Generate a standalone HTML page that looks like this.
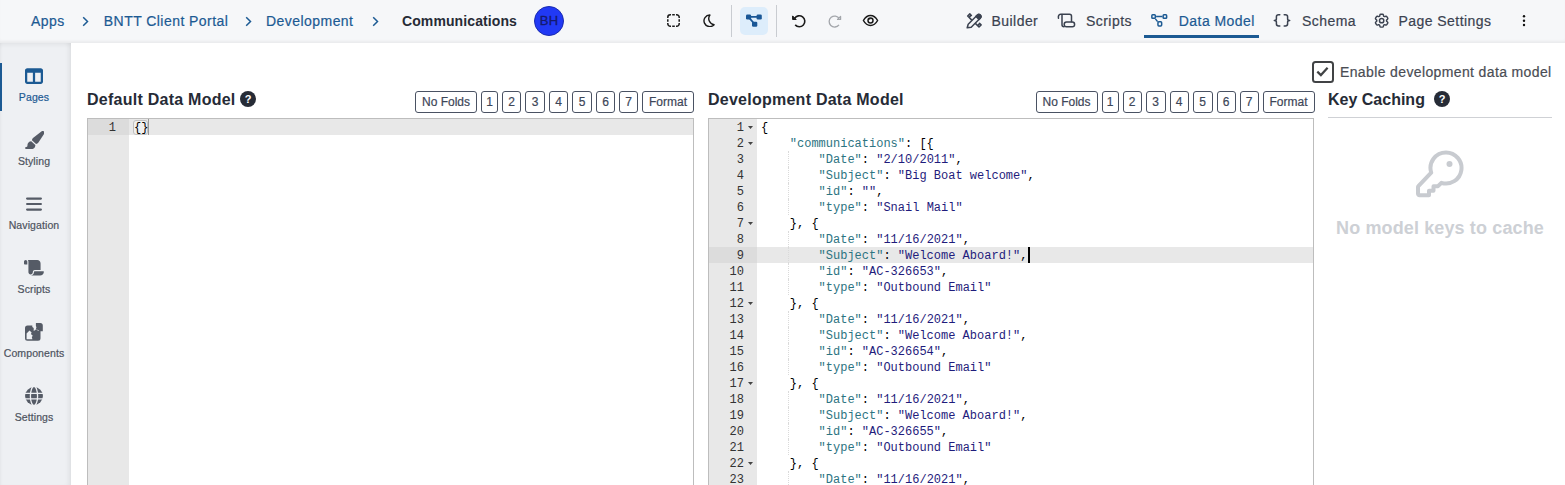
<!DOCTYPE html>
<html><head><meta charset="utf-8">
<style>
*{box-sizing:border-box;margin:0;padding:0}
html,body{width:1565px;height:485px;overflow:hidden;background:#fff;font-family:"Liberation Sans",sans-serif}
.abs{position:absolute}
#hdr{position:absolute;left:0;top:0;width:1565px;height:43px;background:#f6f7f9;box-shadow:inset 0 -3px 3px -1px rgba(0,0,0,.05)}
#side{position:absolute;left:0;top:43px;width:71px;height:442px;background:#eef0f3;box-shadow:inset -5px 0 5px -3px rgba(0,0,0,.07),inset 0 4px 4px -2px rgba(0,0,0,.05),inset 3px 0 3px -2px rgba(0,0,0,.04)}
.bc{position:absolute;top:13px;font-size:14px;color:#1c5a93;white-space:nowrap;line-height:16px;letter-spacing:.45px}
.chev{position:absolute;top:15.6px}
.tab{position:absolute;top:13px;font-size:14px;color:#3b4250;white-space:nowrap;line-height:16px;letter-spacing:.45px}
.tb{position:absolute}
.sl{position:absolute;left:0;width:68px;letter-spacing:.1px;text-align:center;font-size:10.5px;color:#4d535e;line-height:12px}
.h2{position:absolute;font-size:16px;font-weight:bold;color:#262b36;white-space:nowrap;line-height:18px;letter-spacing:.25px}
.q{position:absolute;width:16px;height:16px;border-radius:50%;background:#262b36;color:#fff;font-size:11px;font-weight:bold;text-align:center;line-height:16px}
.btn{position:absolute;top:91px;height:22px;border:1px solid #4a5263;border-radius:3px;font-size:12px;color:#3d4658;text-align:center;line-height:20px;background:#fff}
.ed{position:absolute;top:118px;height:367px;border:1px solid #bdbdbd;border-bottom:none;background:#fff;overflow:hidden}
.gut{position:absolute;left:0;top:0;bottom:0;background:#e8e8e8}
.code{position:absolute;font-family:"Liberation Mono",monospace;font-size:12px;line-height:16px;white-space:pre;color:#000;margin-top:1px}
.ln{position:absolute;font-family:"Liberation Mono",monospace;font-size:12px;line-height:16px;color:#333;text-align:right;margin-top:1px}
.bc,.tab,.sl,.btn,.en{-webkit-text-stroke:.2px currentColor}
.k{color:#2d7482}.s{color:#1f1c7c}
</style></head><body>
<div id="hdr">
<div class="bc" style="left:31px">Apps</div>
<svg class="chev" style="left:82.3px" width="7" height="11" viewBox="0 0 7 11"><path d="M1.2 1.2l4.3 4.3L1.2 9.8" fill="none" stroke="#1c5a93" stroke-width="1.5"/></svg>
<div class="bc" style="left:103.8px">BNTT Client Portal</div>
<svg class="chev" style="left:244.6px" width="7" height="11" viewBox="0 0 7 11"><path d="M1.2 1.2l4.3 4.3L1.2 9.8" fill="none" stroke="#1c5a93" stroke-width="1.5"/></svg>
<div class="bc" style="left:266px">Development</div>
<svg class="chev" style="left:371.6px" width="7" height="11" viewBox="0 0 7 11"><path d="M1.2 1.2l4.3 4.3L1.2 9.8" fill="none" stroke="#1c5a93" stroke-width="1.5"/></svg>
<div class="bc" style="left:402px;color:#262b36;font-weight:bold;letter-spacing:.1px;-webkit-text-stroke:0">Communications</div>
<div class="abs" style="left:534px;top:6px;width:30px;height:30px;border-radius:50%;background:#2139f5;border:1px solid #1a2bb0;color:#141a6e;font-size:13px;text-align:center;line-height:28px;letter-spacing:.2px;-webkit-text-stroke:.3px #141a6e">BH</div>
<!-- toolbar -->
<svg class="tb" style="left:666.5px;top:14.2px" width="13" height="13" viewBox="0 0 13 13" fill="none" stroke="#1a1a1a" stroke-width="1.5"><path d="M.8 4V3.3A2.5 2.5 0 0 1 3.3 .8H4M9 .8h.7A2.5 2.5 0 0 1 12.2 3.3V4M12.2 9v.7A2.5 2.5 0 0 1 9.7 12.2H9M4 12.2h-.7A2.5 2.5 0 0 1 .8 9.7V9M5.2 .8h2.6M5.2 12.2h2.6M.8 5.2v2.6M12.2 5.2v2.6"/></svg>
<svg class="tb" style="left:703px;top:14px" width="12" height="13" viewBox="0 0 12 13"><path d="M6.9 1A5.8 5.8 0 1 0 11.1 10.7A6.2 6.2 0 0 1 6.9 1z" fill="none" stroke="#1a1a1a" stroke-width="1.4" stroke-linejoin="round"/></svg>
<div class="abs" style="left:731px;top:5px;width:1px;height:32px;background:#c9ccd1"></div>
<div class="abs" style="left:740px;top:7px;width:28px;height:28px;border-radius:5px;background:#ddedfb"></div>
<svg class="tb" style="left:745px;top:14px" width="17" height="13" viewBox="0 0 17 13"><path d="M3.5 2.9h11M3.5 3l6 7" stroke="#1a5796" stroke-width="1.9"/><rect x="1" y="0.4" width="5.1" height="5.1" rx="1.3" fill="#1a5796"/><rect x="11.6" y="0.4" width="5.2" height="5.1" rx="1.3" fill="#1a5796"/><rect x="7" y="7.7" width="5.3" height="5.1" rx="1.3" fill="#1a5796"/></svg>
<div class="abs" style="left:776px;top:5px;width:1px;height:32px;background:#c9ccd1"></div>
<svg class="tb" style="left:791px;top:14px" width="15" height="14" viewBox="0 0 15 14"><path d="M3.6 4.4A5.5 5.5 0 1 1 4.2 10.9" fill="none" stroke="#1a1a1a" stroke-width="1.6"/><path d="M1.6 1.9v3.6h3.6z" fill="#1a1a1a" stroke="#1a1a1a" stroke-width="1" stroke-linejoin="round"/></svg>
<svg class="tb" style="left:828px;top:14px" width="15" height="14" viewBox="0 0 15 14"><path d="M11.3 4.6A5.5 5.5 0 1 0 11 10.9" fill="none" stroke="#a3a6ab" stroke-width="1.3"/><path d="M12.6 2.3v3.1H9.5z" fill="#eef0f3" stroke="#a3a6ab" stroke-width="1.2" stroke-linejoin="round"/></svg>
<svg class="tb" style="left:862px;top:14px" width="17" height="13" viewBox="0 0 17 13"><path d="M1.4 6.5C3.4 3 5.8 1.5 8.5 1.5S13.6 3 15.6 6.5C13.6 10 11.2 11.5 8.5 11.5S3.4 10 1.4 6.5z" fill="none" stroke="#1a1a1a" stroke-width="1.5" stroke-linejoin="round"/><circle cx="8.5" cy="6.6" r="2.5" fill="none" stroke="#1a1a1a" stroke-width="1.5"/><path d="M6.2 5.6a2.6 2.6 0 0 1 2.1-1.6v1.6z" fill="#1a1a1a"/></svg>
<!-- tabs -->
<svg class="tb" style="left:966px;top:13px" width="16" height="16" viewBox="0 0 16 16" fill="none" stroke="#3b4250" stroke-width="1.5" stroke-linecap="round" stroke-linejoin="round"><path d="M1.2 14.8l1-3.6L11.4 2a2.1 2.1 0 0 1 3 3L5.2 14.2z"/><path d="M11.2 2.2a2.1 2.1 0 0 1 3 3L13 6.4 10 3.4z" fill="#3b4250"/><path d="M5.3 6.6L1.7 3 3.8.9l1.6 1.6M3.5 3.9l1-1M9.6 10.6l3.4 3.4 2.1-2.1-1.6-1.6M12.1 12.1l1-1"/></svg>
<div class="tab" style="left:991.5px">Builder</div>
<svg class="tb" style="left:1057px;top:13px" width="19" height="15" viewBox="0 0 19 15" fill="none" stroke="#3b4250" stroke-width="1.5" stroke-linecap="round" stroke-linejoin="round"><path d="M1.5 5.3C1 3.5 1.7 1.3 3.5 1.3H12.5a2 2 0 0 1 2 2V8.8"/><path d="M5 1.4V11.7a2 2 0 0 0 2 2"/><rect x="7.2" y="9.1" width="10.4" height="4.6" rx="2.3"/></svg>
<div class="tab" style="left:1086px">Scripts</div>
<svg class="tb" style="left:1150px;top:13px" width="19" height="15" viewBox="0 0 19 15" fill="none" stroke="#1c5a93" stroke-width="1.5"><rect x="1.85" y="1.85" width="3.5" height="3.5" rx="0.8"/><rect x="13.15" y="1.85" width="3.5" height="3.5" rx="0.8"/><rect x="7.95" y="8.75" width="3.7" height="4.2" rx="0.9"/><path d="M6.1 3.6H12.4M5.4 5.9L7.6 8.6"/></svg>
<div class="tab" style="left:1178.8px;color:#1c5a93">Data Model</div>
<div class="abs" style="left:1144px;top:35px;width:115px;height:3px;background:#1c5a93"></div>
<svg class="tb" style="left:1273px;top:13px" width="19" height="15" viewBox="0 0 19 15" fill="none" stroke="#3b4250" stroke-width="1.5" stroke-linecap="round" stroke-linejoin="round"><path d="M6.8 1.8H5.6C4.4 1.8 3.4 2.4 3.4 3.7V5.9C3.4 6.8 2.6 7.4 1.3 7.4C2.6 7.4 3.4 8 3.4 8.9V11.1C3.4 12.4 4.4 13 5.6 13H6.8M11.2 1.8H12.4C13.6 1.8 14.6 2.4 14.6 3.7V5.9C14.6 6.8 15.4 7.4 16.7 7.4C15.4 7.4 14.6 8 14.6 8.9V11.1C14.6 12.4 13.6 13 12.4 13H11.2"/></svg>
<div class="tab" style="left:1302px">Schema</div>
<svg class="tb" style="left:1373px;top:12px" width="17.3" height="17.3" viewBox="0 0 24 24" fill="none" stroke="#3b4250" stroke-width="2" stroke-linecap="round" stroke-linejoin="round"><path d="M9.594 3.94c.09-.542.56-.94 1.11-.94h2.593c.55 0 1.02.398 1.11.94l.213 1.281c.063.374.313.686.645.87.074.04.147.083.22.127.325.196.72.257 1.075.124l1.217-.456a1.125 1.125 0 0 1 1.37.49l1.296 2.247a1.125 1.125 0 0 1-.26 1.431l-1.003.827c-.293.241-.438.613-.43.992a7.723 7.723 0 0 1 0 .255c-.008.378.137.75.43.991l1.004.827c.424.35.534.955.26 1.43l-1.298 2.247a1.125 1.125 0 0 1-1.369.491l-1.217-.456c-.355-.133-.75-.072-1.076.124a6.47 6.47 0 0 1-.22.128c-.331.183-.581.495-.644.869l-.213 1.281c-.09.543-.56.94-1.11.94h-2.594c-.55 0-1.019-.398-1.11-.94l-.213-1.281c-.062-.374-.312-.686-.644-.87a6.52 6.52 0 0 1-.22-.127c-.325-.196-.72-.257-1.076-.124l-1.217.456a1.125 1.125 0 0 1-1.369-.49l-1.297-2.247a1.125 1.125 0 0 1 .26-1.431l1.004-.827c.292-.24.437-.613.43-.991a6.932 6.932 0 0 1 0-.255c.007-.38-.138-.751-.43-.992l-1.004-.827a1.125 1.125 0 0 1-.26-1.43l1.297-2.247a1.125 1.125 0 0 1 1.37-.491l1.216.456c.356.133.751.072 1.076-.124.072-.044.146-.086.22-.128.332-.183.582-.495.644-.869l.214-1.28z"/><circle cx="12" cy="12" r="3"/></svg>
<div class="tab" style="left:1398.5px">Page Settings</div>
<svg class="tb" style="left:1521px;top:14px" width="6" height="14" viewBox="0 0 6 14" fill="#111"><circle cx="3" cy="2.3" r="1.2"/><circle cx="3" cy="6.7" r="1.2"/><circle cx="3" cy="11" r="1.2"/></svg>
</div>
<div id="side">
<div class="abs" style="left:0;top:20px;width:2px;height:48px;background:#1c5a93"></div></div>
<svg class="abs" style="left:25px;top:66.9px" width="18" height="18" viewBox="0 0 512 512"><path fill="#1c5a93" d="M0 96C0 60.7 28.7 32 64 32H448c35.3 0 64 28.7 64 64V416c0 35.3-28.7 64-64 64H64c-35.3 0-64-28.7-64-64V96zm64 64V416H224V160H64zm384 0H288V416H448V160z"/></svg>
<svg class="abs" style="left:23.8px;top:130.9px" width="20.45" height="18.2" viewBox="0 0 576 512"><path fill="#555b66" d="M339.3 367.1c27.3-3.9 51.9-19.4 67.2-42.9L568.2 74.1c12.6-19.5 9.4-45.3-7.6-61.2S517.7-4.4 499.1 9.6L262.4 187.2c-24 18-38.2 46.1-38.4 76.1L339.3 367.1zm-19.6 25.4l-116-104.4C143.9 290.3 96 339.6 96 400c0 3.9 .2 7.8 .6 11.6C98.4 429.1 86.4 448 68.8 448H64c-17.7 0-32 14.3-32 32s14.3 32 32 32H208c61.9 0 112-50.1 112-112c0-2.5-.1-5-.2-7.5z"/></svg>
<svg class="abs" style="left:26px;top:197px" width="16" height="14" viewBox="0 0 16 14"><g stroke="#555b66" stroke-width="2.2" stroke-linecap="round"><path d="M1.1 1.6h13.8M1.1 7h13.8M1.1 12.6h13.8"/></g></svg>
<svg class="abs" style="left:24px;top:258.9px" width="19.9" height="17.7" viewBox="0 0 576 512"><path fill="#555b66" d="M0 80v48c0 17.7 14.3 32 32 32H48 96V80c0-26.5-21.5-48-48-48S0 53.5 0 80zM112 32c10 13.4 16 30 16 48V384c0 35.3 28.7 64 64 64s64-28.7 64-64v-5.3c0-32.4 26.3-58.7 58.7-58.7H480V128c0-53-43-96-96-96H112zM464 480c61.9 0 112-50.1 112-112c0-8.8-7.2-16-16-16H314.7c-14.7 0-26.7 11.9-26.7 26.7V384c0 53-43 96-96 96H368h96z"/></svg>
<svg class="abs" style="left:25px;top:323px" width="18" height="18" viewBox="0 0 18 18"><path fill="#555b66" d="M2.5 2.6H7.3V4.1Q8.7 4.5 8.9 5.9L8.4 7.6H9.9Q10.5 6.2 12.2 6.3L12.9 7.9H15.5V15.3A2.5 2.5 0 0 1 13 17.8H2.5A2.5 2.5 0 0 1 0 15.3V5.1A2.5 2.5 0 0 1 2.5 2.6z"/><path fill="#555b66" d="M10.9 0H15.3A2.5 2.5 0 0 1 17.8 2.5V8.3H14Q13.4 6.8 11.9 6.5L10.9 5.4Q12.1 4.4 10.9 3.1z"/><path fill="#eef0f3" d="M1.6 16.3V10.4L4.5 7.4 6.6 9.5 5.9 11 7.8 12.7 6.8 14.1 7.4 16.3z"/></svg>
<svg class="abs" style="left:24.9px;top:386.9px" width="18" height="18" viewBox="0 0 18 18"><circle cx="9" cy="9" r="8.95" fill="#555b66"/><g fill="none" stroke="#eef0f3" stroke-width="1.3"><path d="M0 6.4H18M0 11.8H18"/><ellipse cx="9" cy="9" rx="3.6" ry="9.6"/></g></svg>
<div class="sl" style="top:91px;color:#1c5a93">Pages</div>
<div class="sl" style="top:155px;">Styling</div>
<div class="sl" style="top:219px;">Navigation</div>
<div class="sl" style="top:283px;">Scripts</div>
<div class="sl" style="top:347px;">Components</div>
<div class="sl" style="top:411px;">Settings</div>
<div class="h2" style="left:87px;top:91px">Default Data Model</div>
<div class="q" style="left:240px;top:91px">?</div>
<div class="h2" style="left:708px;top:91px">Development Data Model</div>
<div class="h2" style="left:1328px;top:91px;letter-spacing:0">Key Caching</div>
<div class="q" style="left:1434px;top:91px">?</div>
<div class="btn" style="left:415px;width:62px">No Folds</div>
<div class="btn" style="left:481px;width:17px">1</div>
<div class="btn" style="left:502px;width:19px">2</div>
<div class="btn" style="left:525px;width:20px">3</div>
<div class="btn" style="left:549px;width:19px">4</div>
<div class="btn" style="left:572px;width:20px">5</div>
<div class="btn" style="left:596px;width:19px">6</div>
<div class="btn" style="left:619px;width:19px">7</div>
<div class="btn" style="left:642px;width:52px">Format</div>
<div class="btn" style="left:1035.5px;width:62px">No Folds</div>
<div class="btn" style="left:1101.5px;width:17px">1</div>
<div class="btn" style="left:1122.5px;width:19px">2</div>
<div class="btn" style="left:1145.5px;width:20px">3</div>
<div class="btn" style="left:1169.5px;width:19px">4</div>
<div class="btn" style="left:1192.5px;width:20px">5</div>
<div class="btn" style="left:1216.5px;width:19px">6</div>
<div class="btn" style="left:1239.5px;width:19px">7</div>
<div class="btn" style="left:1262.5px;width:52px">Format</div>
<div class="abs" style="left:1312px;top:61px;width:22px;height:21.5px;border:2px solid #414345;border-radius:3.5px"></div>
<svg class="abs" style="left:1316px;top:66px" width="13" height="11" viewBox="0 0 13 11"><path d="M1.3 5.6l3.6 3.5 6.7-7.3" fill="none" stroke="#414345" stroke-width="2.2"/></svg>
<div class="abs en" style="left:1340px;top:64px;font-size:14px;color:#4a4d54;white-space:nowrap;line-height:16px;letter-spacing:.37px">Enable development data model</div>
<div class="abs" style="left:1328px;top:117px;width:224px;height:1px;background:#cfd1d5"></div>
<svg class="abs" style="left:1416px;top:150px" width="48" height="48" viewBox="0 0 48 48"><path d="M30 2.5a15.5 15.5 0 1 1-4.6 30.3l-3.4 3.4h-4.5v4.5h-4.5v4.5H3.5a1.5 1.5 0 0 1-1.5-1.5v-6.4c0-.4.2-.8.4-1.1L15.2 22.6A15.5 15.5 0 0 1 30 2.5z" fill="none" stroke="#c8cbd0" stroke-width="4" stroke-linejoin="round"/><circle cx="33.5" cy="14" r="3" fill="#c8cbd0"/></svg>
<div class="abs" style="left:1336px;top:218px;font-size:18px;font-weight:bold;color:#cdd0d5;white-space:nowrap;line-height:20px;letter-spacing:.13px">No model keys to cache</div>
<div class="ed" style="left:87px;width:607px">
<div class="gut" style="width:41px"></div>
<div class="abs" style="left:41px;top:0;width:570px;height:16px;background:#e8e8e8"></div>
<div class="abs" style="left:0;top:0;width:41px;height:16px;background:#dcdcdc"></div>
<div class="ln" style="left:0;top:0;width:28px">1</div>
<div class="abs" style="left:45px;top:1px;width:15px;height:15px;border:1px solid #c0c0c0;border-radius:3px;background:#f0f0f0"></div>
<div class="code" style="left:46px;top:0">{}</div>
<div class="abs" style="left:60px;top:0;width:1px;height:16px;background:#999"></div></div>
<div class="ed" style="left:708px;width:606px">
<div class="gut" style="width:48px"></div>
<div class="abs" style="left:48px;top:128px;width:560px;height:16px;background:#e8e8e8"></div>
<div class="abs" style="left:0;top:128px;width:48px;height:16px;background:#dcdcdc"></div>
<div class="ln" style="left:0;top:0px;width:35px">1</div>
<svg class="abs" style="left:39px;top:7px" width="5" height="3" viewBox="0 0 5 3"><path d="M0 0h5L2.5 3z" fill="#444"/></svg>
<div class="code" style="left:52.0px;top:0px">{</div>
<div class="ln" style="left:0;top:16px;width:35px">2</div>
<svg class="abs" style="left:39px;top:23px" width="5" height="3" viewBox="0 0 5 3"><path d="M0 0h5L2.5 3z" fill="#444"/></svg>
<div class="code" style="left:80.8px;top:16px"><span class="k">"communications"</span>: [{</div>
<div class="ln" style="left:0;top:32px;width:35px">3</div>
<div class="abs" style="left:79px;top:32px;width:0;height:16px;border-left:1px dotted #dadada"></div>
<div class="code" style="left:109.6px;top:32px"><span class="k">"Date"</span>: <span class="s">"2/10/2011"</span>,</div>
<div class="ln" style="left:0;top:48px;width:35px">4</div>
<div class="abs" style="left:79px;top:48px;width:0;height:16px;border-left:1px dotted #dadada"></div>
<div class="code" style="left:109.6px;top:48px"><span class="k">"Subject"</span>: <span class="s">"Big Boat welcome"</span>,</div>
<div class="ln" style="left:0;top:64px;width:35px">5</div>
<div class="abs" style="left:79px;top:64px;width:0;height:16px;border-left:1px dotted #dadada"></div>
<div class="code" style="left:109.6px;top:64px"><span class="k">"id"</span>: <span class="s">""</span>,</div>
<div class="ln" style="left:0;top:80px;width:35px">6</div>
<div class="abs" style="left:79px;top:80px;width:0;height:16px;border-left:1px dotted #dadada"></div>
<div class="code" style="left:109.6px;top:80px"><span class="k">"type"</span>: <span class="s">"Snail Mail"</span></div>
<div class="ln" style="left:0;top:96px;width:35px">7</div>
<svg class="abs" style="left:39px;top:103px" width="5" height="3" viewBox="0 0 5 3"><path d="M0 0h5L2.5 3z" fill="#444"/></svg>
<div class="code" style="left:80.8px;top:96px">}, {</div>
<div class="ln" style="left:0;top:112px;width:35px">8</div>
<div class="abs" style="left:79px;top:112px;width:0;height:16px;border-left:1px dotted #dadada"></div>
<div class="code" style="left:109.6px;top:112px"><span class="k">"Date"</span>: <span class="s">"11/16/2021"</span>,</div>
<div class="ln" style="left:0;top:128px;width:35px">9</div>
<div class="abs" style="left:79px;top:128px;width:0;height:16px;border-left:1px dotted #dadada"></div>
<div class="code" style="left:109.6px;top:128px"><span class="k">"Subject"</span>: <span class="s">"Welcome Aboard!"</span>,</div>
<div class="ln" style="left:0;top:144px;width:35px">10</div>
<div class="abs" style="left:79px;top:144px;width:0;height:16px;border-left:1px dotted #dadada"></div>
<div class="code" style="left:109.6px;top:144px"><span class="k">"id"</span>: <span class="s">"AC-326653"</span>,</div>
<div class="ln" style="left:0;top:160px;width:35px">11</div>
<div class="abs" style="left:79px;top:160px;width:0;height:16px;border-left:1px dotted #dadada"></div>
<div class="code" style="left:109.6px;top:160px"><span class="k">"type"</span>: <span class="s">"Outbound Email"</span></div>
<div class="ln" style="left:0;top:176px;width:35px">12</div>
<svg class="abs" style="left:39px;top:183px" width="5" height="3" viewBox="0 0 5 3"><path d="M0 0h5L2.5 3z" fill="#444"/></svg>
<div class="code" style="left:80.8px;top:176px">}, {</div>
<div class="ln" style="left:0;top:192px;width:35px">13</div>
<div class="abs" style="left:79px;top:192px;width:0;height:16px;border-left:1px dotted #dadada"></div>
<div class="code" style="left:109.6px;top:192px"><span class="k">"Date"</span>: <span class="s">"11/16/2021"</span>,</div>
<div class="ln" style="left:0;top:208px;width:35px">14</div>
<div class="abs" style="left:79px;top:208px;width:0;height:16px;border-left:1px dotted #dadada"></div>
<div class="code" style="left:109.6px;top:208px"><span class="k">"Subject"</span>: <span class="s">"Welcome Aboard!"</span>,</div>
<div class="ln" style="left:0;top:224px;width:35px">15</div>
<div class="abs" style="left:79px;top:224px;width:0;height:16px;border-left:1px dotted #dadada"></div>
<div class="code" style="left:109.6px;top:224px"><span class="k">"id"</span>: <span class="s">"AC-326654"</span>,</div>
<div class="ln" style="left:0;top:240px;width:35px">16</div>
<div class="abs" style="left:79px;top:240px;width:0;height:16px;border-left:1px dotted #dadada"></div>
<div class="code" style="left:109.6px;top:240px"><span class="k">"type"</span>: <span class="s">"Outbound Email"</span></div>
<div class="ln" style="left:0;top:256px;width:35px">17</div>
<svg class="abs" style="left:39px;top:263px" width="5" height="3" viewBox="0 0 5 3"><path d="M0 0h5L2.5 3z" fill="#444"/></svg>
<div class="code" style="left:80.8px;top:256px">}, {</div>
<div class="ln" style="left:0;top:272px;width:35px">18</div>
<div class="abs" style="left:79px;top:272px;width:0;height:16px;border-left:1px dotted #dadada"></div>
<div class="code" style="left:109.6px;top:272px"><span class="k">"Date"</span>: <span class="s">"11/16/2021"</span>,</div>
<div class="ln" style="left:0;top:288px;width:35px">19</div>
<div class="abs" style="left:79px;top:288px;width:0;height:16px;border-left:1px dotted #dadada"></div>
<div class="code" style="left:109.6px;top:288px"><span class="k">"Subject"</span>: <span class="s">"Welcome Aboard!"</span>,</div>
<div class="ln" style="left:0;top:304px;width:35px">20</div>
<div class="abs" style="left:79px;top:304px;width:0;height:16px;border-left:1px dotted #dadada"></div>
<div class="code" style="left:109.6px;top:304px"><span class="k">"id"</span>: <span class="s">"AC-326655"</span>,</div>
<div class="ln" style="left:0;top:320px;width:35px">21</div>
<div class="abs" style="left:79px;top:320px;width:0;height:16px;border-left:1px dotted #dadada"></div>
<div class="code" style="left:109.6px;top:320px"><span class="k">"type"</span>: <span class="s">"Outbound Email"</span></div>
<div class="ln" style="left:0;top:336px;width:35px">22</div>
<svg class="abs" style="left:39px;top:343px" width="5" height="3" viewBox="0 0 5 3"><path d="M0 0h5L2.5 3z" fill="#444"/></svg>
<div class="code" style="left:80.8px;top:336px">}, {</div>
<div class="ln" style="left:0;top:352px;width:35px">23</div>
<div class="abs" style="left:79px;top:352px;width:0;height:16px;border-left:1px dotted #dadada"></div>
<div class="code" style="left:109.6px;top:352px"><span class="k">"Date"</span>: <span class="s">"11/16/2021"</span>,</div>
<div class="abs" style="left:319.40000000000003px;top:128px;width:2px;height:16px;background:#000"></div></div>
</body></html>
